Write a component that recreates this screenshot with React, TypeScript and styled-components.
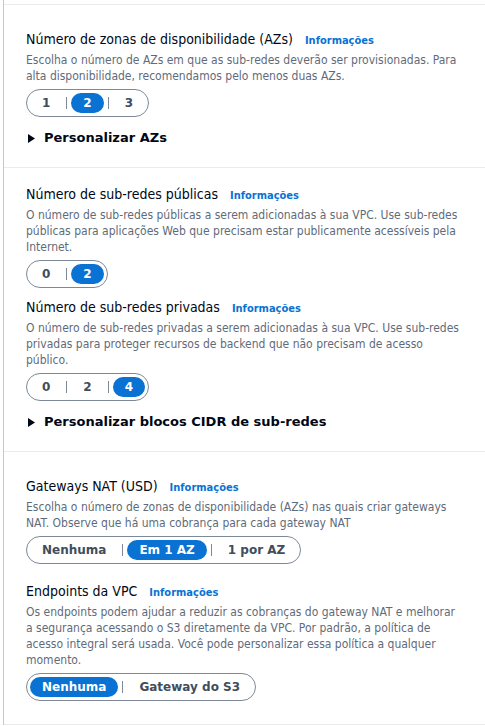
import React from "react";
import styled, { createGlobalStyle } from "styled-components";

const GlobalStyle = createGlobalStyle`
  html, body { margin: 0; padding: 0; background: #ffffff; }
  body { font-family: "DejaVu Sans Condensed", "DejaVu Sans", sans-serif; color: #000716; }
  * { box-sizing: border-box; }
`;

const Panel = styled.div`
  margin-left: 3px;
  padding-top: 4px;
  border-left: 1px solid #c6c6cd;
  width: 482px;
`;

const Section = styled.section<{ $pt: number; $last?: boolean }>`
  border-top: 1px solid #e9ebed;
  border-bottom: ${(p) => (p.$last ? "1px solid #e9ebed" : "none")};
  padding: ${(p) => p.$pt}px 20px ${(p) => (p.$last ? 23 : 18)}px 22px;
`;

const Field = styled.div<{ $mt?: number }>`
  margin-top: ${(p) => p.$mt || 0}px;
  display: flex;
  flex-direction: column;
  align-items: flex-start;
`;

const Label = styled.div`
  display: flex;
  align-items: baseline;
  height: 22px;
  font-family: "DejaVu Sans Condensed", "DejaVu Sans", sans-serif;
  font-size: 14px;
  line-height: 22px;
  color: #000716;
  white-space: nowrap;
`;

const InfoLink = styled.a`
  margin-left: 12px;
  font-family: "DejaVu Sans Condensed", "DejaVu Sans", sans-serif;
  font-size: 11px;
  font-weight: 700;
  line-height: 1;
  color: #0972d3;
  text-decoration: none;
  cursor: pointer;
`;

const Description = styled.p`
  margin: 2px 0 0;
  font-family: "DejaVu Sans Condensed", "DejaVu Sans", sans-serif;
  font-size: 12px;
  line-height: 16px;
  color: #5f6b7a;
`;

const Segmented = styled.div`
  margin-top: 5px;
  display: inline-flex;
  align-items: center;
  height: 28px;
  padding: 3px;
  border: 1px solid #7d8998;
  border-radius: 16px;
  background: #ffffff;
`;

const SegButton = styled.button<{ $selected?: boolean }>`
  height: 20px;
  margin: 0;
  padding: 0 12px;
  border: none;
  border-radius: 10px;
  background: ${(p) => (p.$selected ? "#0972d3" : "transparent")};
  color: ${(p) => (p.$selected ? "#ffffff" : "#414d5c")};
  font-family: "DejaVu Sans", sans-serif;
  font-size: 12px;
  font-weight: 700;
  line-height: 20px;
  white-space: nowrap;
  cursor: pointer;
`;

const SegDivider = styled.span`
  width: 1px;
  height: 12px;
  margin: 0 4px;
  background: #7d8998;
`;

const ExpandHeader = styled.div`
  margin-top: 10px;
  display: flex;
  align-items: center;
  gap: 9px;
  height: 22px;
  font-family: "DejaVu Sans", sans-serif;
  font-size: 13px;
  font-weight: 700;
  line-height: 22px;
  color: #000716;
  cursor: pointer;
`;

const Caret = styled.svg`
  margin-left: 2px;
  width: 7px;
  height: 9px;
  flex: none;
`;

type SegProps = { options: string[]; selected: number };
const SegmentedControl = ({ options, selected }: SegProps) => (
  <Segmented>
    {options.map((o, i) => (
      <React.Fragment key={o}>
        {i > 0 && <SegDivider />}
        <SegButton $selected={i === selected}>{o}</SegButton>
      </React.Fragment>
    ))}
  </Segmented>
);

type FieldProps = {
  label: string;
  description: string;
  options: string[];
  selected: number;
  mt?: number;
};
const FormField = ({ label, description, options, selected, mt }: FieldProps) => (
  <Field $mt={mt}>
    <Label>
      <span>{label}</span>
      <InfoLink>Informações</InfoLink>
    </Label>
    <Description>{description}</Description>
    <SegmentedControl options={options} selected={selected} />
  </Field>
);

const Expander = ({ children }: { children: React.ReactNode }) => (
  <ExpandHeader>
    <Caret viewBox="0 0 7 9">
      <polygon points="0,0 7,4.5 0,9" fill="#000716" />
    </Caret>
    <span>{children}</span>
  </ExpandHeader>
);

export default function App() {
  return (
    <>
      <GlobalStyle />
      <Panel>
        <Section $pt={23}>
          <FormField
            label="Número de zonas de disponibilidade (AZs)"
            description="Escolha o número de AZs em que as sub-redes deverão ser provisionadas. Para alta disponibilidade, recomendamos pelo menos duas AZs."
            options={["1", "2", "3"]}
            selected={1}
          />
          <Expander>Personalizar AZs</Expander>
        </Section>
        <Section $pt={15}>
          <FormField
            label="Número de sub-redes públicas"
            description="O número de sub-redes públicas a serem adicionadas à sua VPC. Use sub-redes públicas para aplicações Web que precisam estar publicamente acessíveis pela Internet."
            options={["0", "2"]}
            selected={1}
          />
          <FormField
            mt={8}
            label="Número de sub-redes privadas"
            description="O número de sub-redes privadas a serem adicionadas à sua VPC. Use sub-redes privadas para proteger recursos de backend que não precisam de acesso público."
            options={["0", "2", "4"]}
            selected={2}
          />
          <Expander>Personalizar blocos CIDR de sub-redes</Expander>
        </Section>
        <Section $pt={23} $last>
          <FormField
            label="Gateways NAT (USD)"
            description="Escolha o número de zonas de disponibilidade (AZs) nas quais criar gateways NAT. Observe que há uma cobrança para cada gateway NAT"
            options={["Nenhuma", "Em 1 AZ", "1 por AZ"]}
            selected={1}
          />
          <FormField
            mt={16}
            label="Endpoints da VPC"
            description="Os endpoints podem ajudar a reduzir as cobranças do gateway NAT e melhorar a segurança acessando o S3 diretamente da VPC. Por padrão, a política de acesso integral será usada. Você pode personalizar essa política a qualquer momento."
            options={["Nenhuma", "Gateway do S3"]}
            selected={0}
          />
        </Section>
      </Panel>
    </>
  );
}
